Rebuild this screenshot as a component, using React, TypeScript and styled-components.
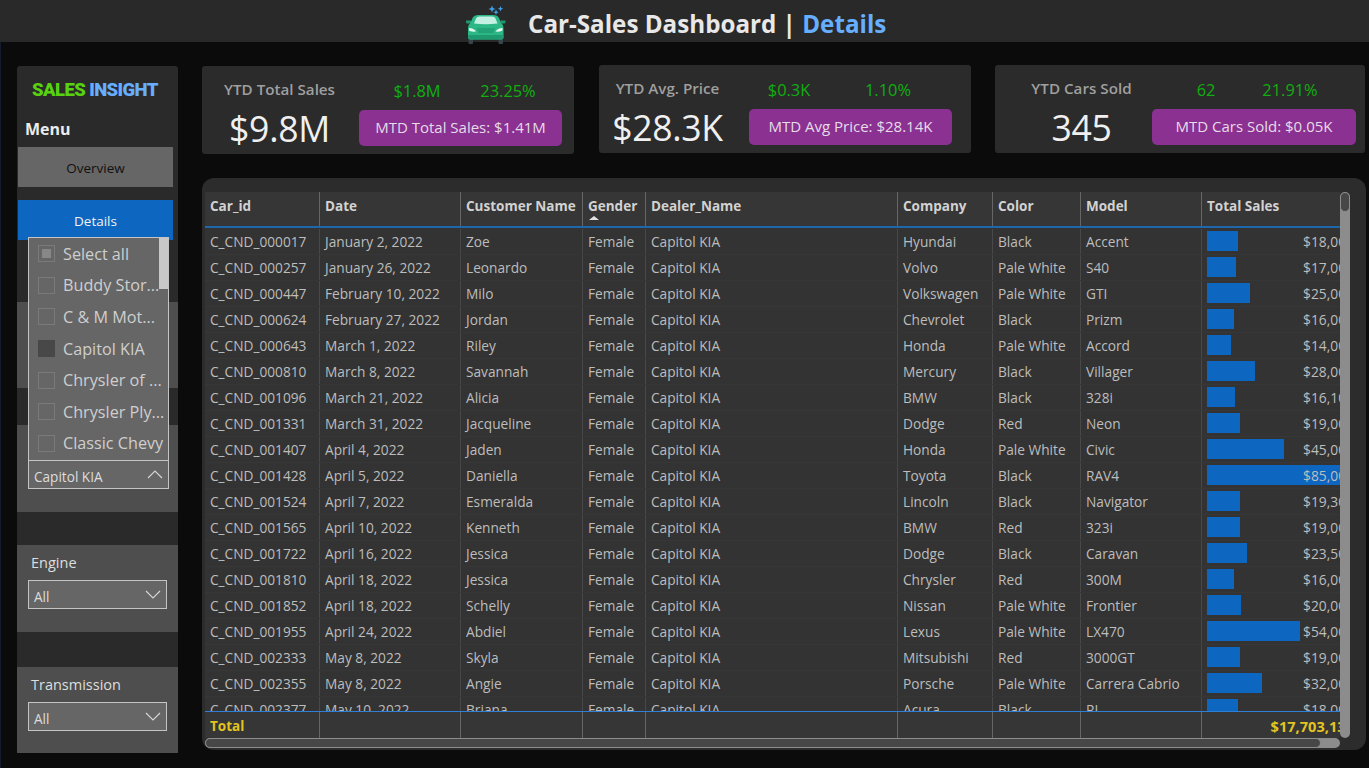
import React from 'react';
import styled, { createGlobalStyle } from 'styled-components';

const Global = createGlobalStyle`
  html, body { margin: 0; padding: 0; background: #0b0b0b; }
  body { width: 1369px; height: 768px; overflow: hidden; font-family: "Open Sans", "Noto Sans", sans-serif; }
  * { box-sizing: border-box; }
`;

const Page = styled.div`
  width: 1369px;
  height: 768px;
  display: flex;
  flex-direction: column;
  background: #0b0b0b;
  overflow: hidden;
`;

const Header = styled.header`
  height: 42px;
  flex: none;
  background: #292929;
  display: flex;
  align-items: flex-start;
  padding-left: 466px;
`;

const HeaderIcon = styled.svg`
  width: 40px;
  height: 40px;
  margin-top: 5px;
  flex: none;
  position: relative;
`;

const Title = styled.h1`
  margin: 5px 0 0 22px;
  font-size: 24.2px;
  line-height: 38px;
  font-weight: 700;
  color: #e8e8e8;
  white-space: nowrap;
`;

const TitleAccent = styled.span`
  color: #66aeff;
`;

const Main = styled.main`
  flex: 1;
  display: flex;
  border-left: 1px solid #141a2c;
  padding-left: 16px;
  min-height: 0;
`;

const Sidebar = styled.aside`
  width: 161px;
  height: 687px;
  margin-top: 24px;
  background: #2a2a2a;
  border-radius: 3px 3px 0 0;
  flex: none;
`;

const Logo = styled.div`
  height: 45px;
  padding: 13px 0 0 15px;
  font-family: "Roboto", sans-serif;
  font-size: 18.5px;
  line-height: 23px;
  font-weight: 900;
  letter-spacing: -0.6px;
  color: #58d111;
  white-space: nowrap;
`;

const LogoAccent = styled.span`
  color: #66aeff;
`;

const MenuLabel = styled.div`
  height: 36px;
  padding: 7px 0 0 8px;
  font-size: 16px;
  line-height: 22px;
  font-weight: 700;
  color: #ececec;
`;

const NavButton = styled.div<{ $active?: boolean }>`
  width: 155px;
  height: 40px;
  margin: ${(p) => (p.$active ? '13px' : '0')} 0 0 1px;
  display: flex;
  align-items: center;
  justify-content: center;
  padding-top: 2px;
  font-size: 13.5px;
  background: ${(p) => (p.$active ? '#0d66c0' : '#666666')};
  color: ${(p) => (p.$active ? '#f2f2f2' : '#111111')};
`;

const FilterPanel = styled.section<{ $gap: number; $h: number }>`
  height: ${(p) => p.$h}px;
  margin-top: ${(p) => p.$gap}px;
  padding: 8px 11px 0 11px;
  background: #4e4e4e;
`;

const FilterLabel = styled.div`
  font-size: 14.5px;
  line-height: 20px;
  padding-left: 3px;
  color: #dedede;
  height: 27px;
`;

const SelectBox = styled.div<{ $up?: boolean }>`
  position: relative;
  width: ${(p) => (p.$up ? '141px' : '139px')};
  height: 29px;
  padding: 3px 5px 0 5px;
  display: flex;
  align-items: center;
  justify-content: space-between;
  background: #666666;
  border: 1px solid #c4c4c4;
  font-size: 13.6px;
  color: #dddddd;
`;

const Chevron = styled.svg`
  width: 16px;
  height: 9px;
  flex: none;
  margin-top: -4px;
`;

const Popup = styled.div`
  position: absolute;
  left: -1px;
  bottom: 27px;
  width: 141px;
  height: 224px;
  padding: 0 0 0 9px;
  background: #666666;
  border: 1px solid #c4c4c4;
  overflow: hidden;
`;

const PopupThumb = styled.div`
  position: absolute;
  right: 0;
  top: 0;
  width: 9px;
  height: 51px;
  background: #c8c8c8;
`;

const PopupRow = styled.div`
  height: 31.6px;
  display: flex;
  align-items: center;
  gap: 8px;
  font-size: 16.2px;
  color: #cfcfcf;
  white-space: nowrap;
`;

const Check = styled.span<{ $state?: 'partial' | 'on' }>`
  width: 17px;
  height: 17px;
  flex: none;
  display: flex;
  align-items: center;
  justify-content: center;
  border: 1px solid ${(p) => (p.$state === 'on' ? '#484848' : '#7a7a7a')};
  background: ${(p) => (p.$state === 'on' ? '#484848' : 'transparent')};
`;

const CheckDot = styled.span`
  width: 9px;
  height: 9px;
  background: #878787;
`;

const Content = styled.div`
  margin-left: 24px;
  flex: none;
  width: 1164px;
  display: flex;
  flex-direction: column;
`;

const KpiRow = styled.div`
  display: flex;
  gap: 25px;
  height: 135px;
  flex: none;
  padding-top: 24px;
`;

const KpiCard = styled.section<{ $w: number; $left: number; $dy: number; $pad: number; $gapFix?: number }>`
  width: ${(p) => p.$w}px;
  height: 88px;
  margin-top: ${(p) => p.$dy}px;
  margin-left: ${(p) => p.$gapFix ?? 0}px;
  padding-right: ${(p) => p.$pad}px;
  display: grid;
  grid-template-columns: ${(p) => p.$left}px 1fr;
  background: #2b2b2b;
  border-radius: 3px;
`;

const KpiLeft = styled.div<{ $pl: number; $pr: number }>`
  padding: 13px ${(p) => p.$pr}px 0 ${(p) => p.$pl}px;
  text-align: center;
  white-space: nowrap;
`;

const KpiTitle = styled.div`
  font-size: 15.2px;
  line-height: 20px;
  font-weight: 600;
  color: #9f9f9f;
`;

const KpiValue = styled.div`
  margin-top: 5px;
  font-size: 35.6px;
  line-height: 48px;
  font-weight: 500;
  color: #f0f0f0;
  letter-spacing: -0.3px;
`;

const KpiRight = styled.div`
  padding-top: 13px;
`;

const Deltas = styled.div<{ $cols: string }>`
  display: grid;
  grid-template-columns: ${(p) => p.$cols};
  height: 31px;
`;

const Delta = styled.span`
  text-align: center;
  font-size: 16.4px;
  line-height: 23px;
  font-weight: 500;
  color: #10ae10;
  white-space: nowrap;
`;

const Pill = styled.div`
  height: 36px;
  padding-bottom: 2px;
  display: flex;
  align-items: center;
  justify-content: center;
  background: #8a3191;
  border-radius: 5px;
  font-size: 15px;
  color: #e6dce8;
  white-space: nowrap;
`;

const TableCard = styled.section`
  position: relative;
  margin-top: 1px;
  width: 1164px;
  height: 572px;
  padding: 14px 26px 2px 3px;
  background: #2c2c2c;
  border-radius: 12px;
  display: flex;
  flex-direction: column;
  overflow: hidden;
`;

const columns = '115px 141px 122px 63px 252px 95px 88px 121px 152px';

const HeadRow = styled.div`
  display: grid;
  grid-template-columns: ${columns};
  height: 36px;
  flex: none;
  overflow: hidden;
  background: #363636;
  border-bottom: 2px solid #1f67ac;
`;

const HeadCell = styled.div`
  position: relative;
  padding: 5px 0 0 5px;
  font-size: 13.5px;
  line-height: 18px;
  font-weight: 700;
  color: #d2d2d2;
  border-right: 1px solid #666666;
  white-space: nowrap;
  &:last-child { border-right: 0; }
`;

const SortCaret = styled.span`
  position: absolute;
  left: 6px;
  top: 24px;
  width: 0;
  height: 0;
  border-left: 5px solid transparent;
  border-right: 5px solid transparent;
  border-bottom: 4px solid #e2e2e2;
`;

const Body = styled.div`
  flex: 1;
  min-height: 0;
  overflow: hidden;
  padding-top: 1px;
  background: #333333;
`;

const Row = styled.div`
  display: grid;
  grid-template-columns: ${columns};
  height: 26px;
  border-bottom: 1px solid #373737;
`;

const Cell = styled.div`
  padding: 3px 0 0 5px;
  font-size: 13.7px;
  line-height: 20px;
  color: #bdbdbd;
  border-right: 1px solid #484848;
  white-space: nowrap;
  overflow: hidden;
`;

const SalesCell = styled.div`
  position: relative;
  padding: 3px 0 0 0;
  font-size: 13.8px;
  line-height: 20px;
  color: #bdbdbd;
  text-align: right;
  white-space: nowrap;
`;

const Bar = styled.span`
  position: absolute;
  left: 5px;
  top: 2px;
  height: 20px;
  background: #0d66c0;
`;

const SalesText = styled.span`
  position: relative;
`;

const FootRow = styled.div`
  display: grid;
  grid-template-columns: ${columns};
  height: 27px;
  flex: none;
  overflow: hidden;
  background: #363636;
  border-top: 1px solid #2f7fd6;
`;

const FootCell = styled.div<{ $right?: boolean }>`
  padding: ${(p) => (p.$right ? '4px 0 0 0' : '4px 0 0 5px')};
  text-align: ${(p) => (p.$right ? 'right' : 'left')};
  font-size: ${(p) => (p.$right ? '14.6px' : '13.5px')};
  line-height: 20px;
  font-weight: 700;
  color: #e3c422;
  border-right: 1px solid #666666;
  white-space: nowrap;
  &:last-child { border-right: 0; }
`;

const HScroll = styled.div`
  height: 10px;
  flex: none;
  background: #8c8c8c;
  border-radius: 5px;
`;

const HThumb = styled.div`
  width: 1116px;
  height: 10px;
  background: #474747;
  border: 1px solid #8c8c8c;
  border-radius: 5px;
`;

const VScroll = styled.div`
  position: absolute;
  top: 14px;
  left: 1138px;
  width: 10px;
  height: 546px;
  background: #8c8c8c;
  border-radius: 5px;
`;

const VThumb = styled.div`
  width: 10px;
  height: 20px;
  background: #474747;
  border: 1px solid #8c8c8c;
  border-radius: 5px;
`;

const heads = ['Car_id', 'Date', 'Customer Name', 'Gender', 'Dealer_Name', 'Company', 'Color', 'Model', 'Total Sales'];

type R = [string, string, string, string, string, string, number];
const rows: R[] = [
  ['C_CND_000017', 'January 2, 2022', 'Zoe', 'Hyundai', 'Black', 'Accent', 18000],
  ['C_CND_000257', 'January 26, 2022', 'Leonardo', 'Volvo', 'Pale White', 'S40', 17000],
  ['C_CND_000447', 'February 10, 2022', 'Milo', 'Volkswagen', 'Pale White', 'GTI', 25000],
  ['C_CND_000624', 'February 27, 2022', 'Jordan', 'Chevrolet', 'Black', 'Prizm', 16000],
  ['C_CND_000643', 'March 1, 2022', 'Riley', 'Honda', 'Pale White', 'Accord', 14000],
  ['C_CND_000810', 'March 8, 2022', 'Savannah', 'Mercury', 'Black', 'Villager', 28000],
  ['C_CND_001096', 'March 21, 2022', 'Alicia', 'BMW', 'Black', '328i', 16100],
  ['C_CND_001331', 'March 31, 2022', 'Jacqueline', 'Dodge', 'Red', 'Neon', 19000],
  ['C_CND_001407', 'April 4, 2022', 'Jaden', 'Honda', 'Pale White', 'Civic', 45000],
  ['C_CND_001428', 'April 5, 2022', 'Daniella', 'Toyota', 'Black', 'RAV4', 85000],
  ['C_CND_001524', 'April 7, 2022', 'Esmeralda', 'Lincoln', 'Black', 'Navigator', 19300],
  ['C_CND_001565', 'April 10, 2022', 'Kenneth', 'BMW', 'Red', '323i', 19000],
  ['C_CND_001722', 'April 16, 2022', 'Jessica', 'Dodge', 'Black', 'Caravan', 23500],
  ['C_CND_001810', 'April 18, 2022', 'Jessica', 'Chrysler', 'Red', '300M', 16000],
  ['C_CND_001852', 'April 18, 2022', 'Schelly', 'Nissan', 'Pale White', 'Frontier', 20000],
  ['C_CND_001955', 'April 24, 2022', 'Abdiel', 'Lexus', 'Pale White', 'LX470', 54000],
  ['C_CND_002333', 'May 8, 2022', 'Skyla', 'Mitsubishi', 'Red', '3000GT', 19000],
  ['C_CND_002355', 'May 8, 2022', 'Angie', 'Porsche', 'Pale White', 'Carrera Cabrio', 32000],
  ['C_CND_002377', 'May 10, 2022', 'Briana', 'Acura', 'Black', 'RL', 18000],
];

const dealers = ['Buddy Stor...', 'C & M Mot...', 'Capitol KIA', 'Chrysler of ...', 'Chrysler Ply...', 'Classic Chevy'];

const kpis = [
  { title: 'YTD Total Sales', value: '$9.8M', d1: '$1.8M', d2: '23.25%', pill: 'MTD Total Sales: $1.41M', w: 372, left: 157, dy: 0, pad: 12, pl: 0, pr: 2, cols: '116px 66px', fix: 0 },
  { title: 'YTD Avg. Price', value: '$28.3K', d1: '$0.3K', d2: '1.10%', pill: 'MTD Avg Price: $28.14K', w: 372, left: 150, dy: -1, pad: 19, pl: 0, pr: 13, cols: '80px 118px', fix: 0 },
  { title: 'YTD Cars Sold', value: '345', d1: '62', d2: '21.91%', pill: 'MTD Cars Sold: $0.05K', w: 370, left: 157, dy: -1, pad: 9, pl: 16, pr: 0, cols: '108px 60px', fix: -1 },
];

const money = (n: number) => '$' + n.toLocaleString('en-US');

const ChevronIcon = ({ up }: { up?: boolean }) => (
  <Chevron viewBox="0 0 16 9" fill="none" stroke="#d8d8d8" strokeWidth="1.1">
    <path d={up ? 'M1 8 L8 1 L15 8' : 'M1 1 L8 8 L15 1'} />
  </Chevron>
);

const CarIcon = () => (
  <HeaderIcon viewBox="0 0 40 40">
    <path d="M26 0.500 L27 3 L29.500 4 L27 5 L26 7.500 L25 5 L22.500 4 L25 3Z" fill="#3f9fe8" />
    <path d="M34.500 1 L35.300 3 L37.300 3.700 L35.300 4.400 L34.500 6.400 L33.700 4.400 L31.700 3.700 L33.700 3Z" fill="#3f9fe8" />
    <path d="M30 4.500 L30.800 6.500 L32.800 7.200 L30.800 7.900 L30 9.900 L29.200 7.900 L27.200 7.200 L29.200 6.500Z" fill="#3f9fe8" />
    <rect x="2.500" y="33" width="4.500" height="6" rx="1" fill="#38444c" />
    <rect x="32.500" y="33" width="4.500" height="6" rx="1" fill="#38444c" />
    <path d="M0 15.500 H5 V18.500 H1.500 Q0 18.500 0 17Z M39.500 15.500 H34.500 V18.500 H38 Q39.500 18.500 39.500 17Z" fill="#1f9a70" />
    <path d="M6.500 13 Q8 10 12.500 10 H27 Q31.500 10 33 13 L35 18 Q37.500 19.500 37.500 23 V32 Q37.500 34.500 35 34.500 H4.500 Q2 34.500 2 32 V23 Q2 19.500 4.500 18Z" fill="#2cb886" />
    <path d="M8 18.500 L10 13.500 Q10.800 11.500 13.500 11.500 H26 Q28.700 11.500 29.500 13.500 L31.500 18.500 Q19.750 20 8 18.500Z" fill="#c4f0e3" />
    <path d="M10.500 23 H29 L27 28 H12.500Z" fill="#22a277" />
    <path d="M3 23 Q8 23 10 26.500 Q4.500 27 3 25.500Z M36.500 23 Q31.500 23 29.500 26.500 Q35 27 36.500 25.500Z" fill="#e4f8f1" />
    <path d="M2 30 H37.500 V32 Q37.500 34.500 35 34.500 H4.500 Q2 34.500 2 32Z" fill="#1f9a70" />
  </HeaderIcon>
);

export default function App() {
  return (
    <Page>
      <Global />
      <Header>
        <CarIcon />
        <Title>
          Car-Sales Dashboard | <TitleAccent>Details</TitleAccent>
        </Title>
      </Header>
      <Main>
        <Sidebar>
          <Logo>
            SALES <LogoAccent>INSIGHT</LogoAccent>
          </Logo>
          <MenuLabel>Menu</MenuLabel>
          <NavButton>Overview</NavButton>
          <NavButton $active>Details</NavButton>
          <FilterPanel $gap={62} $h={86}>
            <FilterLabel />
            <SelectBox>
              All
              <ChevronIcon />
            </SelectBox>
          </FilterPanel>
          <FilterPanel $gap={37} $h={87}>
            <FilterLabel />
            <SelectBox $up>
              Capitol KIA
              <ChevronIcon up />
              <Popup>
                <PopupThumb />
                <PopupRow>
                  <Check>
                    <CheckDot />
                  </Check>
                  Select all
                </PopupRow>
                {dealers.map((d) => (
                  <PopupRow key={d}>
                    <Check $state={d === 'Capitol KIA' ? 'on' : undefined} />
                    {d}
                  </PopupRow>
                ))}
              </Popup>
            </SelectBox>
          </FilterPanel>
          <FilterPanel $gap={33} $h={87}>
            <FilterLabel>Engine</FilterLabel>
            <SelectBox>
              All
              <ChevronIcon />
            </SelectBox>
          </FilterPanel>
          <FilterPanel $gap={35} $h={86}>
            <FilterLabel>Transmission</FilterLabel>
            <SelectBox>
              All
              <ChevronIcon />
            </SelectBox>
          </FilterPanel>
        </Sidebar>
        <Content>
          <KpiRow>
            {kpis.map((k) => (
              <KpiCard key={k.title} $w={k.w} $left={k.left} $dy={k.dy} $pad={k.pad} $gapFix={k.fix}>
                <KpiLeft $pl={k.pl} $pr={k.pr}>
                  <KpiTitle>{k.title}</KpiTitle>
                  <KpiValue>{k.value}</KpiValue>
                </KpiLeft>
                <KpiRight>
                  <Deltas $cols={k.cols}>
                    <Delta>{k.d1}</Delta>
                    <Delta>{k.d2}</Delta>
                  </Deltas>
                  <Pill>{k.pill}</Pill>
                </KpiRight>
              </KpiCard>
            ))}
          </KpiRow>
          <TableCard>
            <HeadRow>
              {heads.map((h) => (
                <HeadCell key={h}>
                  {h}
                  {h === 'Gender' && <SortCaret />}
                </HeadCell>
              ))}
            </HeadRow>
            <Body>
              {rows.map((r) => (
                <Row key={r[0]}>
                  <Cell>{r[0]}</Cell>
                  <Cell>{r[1]}</Cell>
                  <Cell>{r[2]}</Cell>
                  <Cell>Female</Cell>
                  <Cell>Capitol KIA</Cell>
                  <Cell>{r[3]}</Cell>
                  <Cell>{r[4]}</Cell>
                  <Cell>{r[5]}</Cell>
                  <SalesCell>
                    <Bar style={{ width: `${(r[6] / 85000) * 146}px` }} />
                    <SalesText>{money(r[6])}</SalesText>
                  </SalesCell>
                </Row>
              ))}
            </Body>
            <FootRow>
              <FootCell>Total</FootCell>
              <FootCell />
              <FootCell />
              <FootCell />
              <FootCell />
              <FootCell />
              <FootCell />
              <FootCell />
              <FootCell $right>$17,703,130</FootCell>
            </FootRow>
            <HScroll>
              <HThumb />
            </HScroll>
            <VScroll>
              <VThumb />
            </VScroll>
          </TableCard>
        </Content>
      </Main>
    </Page>
  );
}
